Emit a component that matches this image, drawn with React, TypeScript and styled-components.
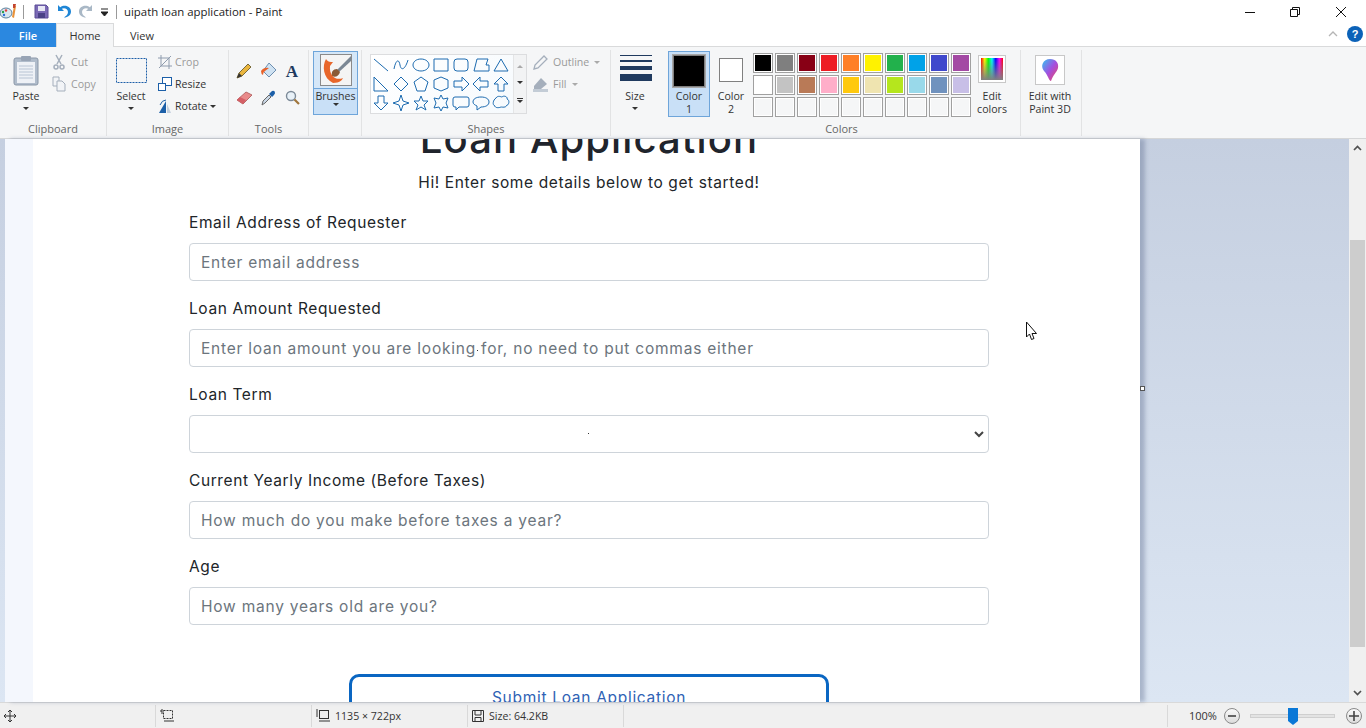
import React from 'react'
import styled, { createGlobalStyle } from 'styled-components'

const ui = `"Open Sans", "Noto Sans", sans-serif`
const web = `Inter, "Noto Sans", sans-serif`

const GlobalStyle = createGlobalStyle`
  html, body { margin: 0; padding: 0; height: 100%; overflow: hidden; background: #fff; }
  * { box-sizing: border-box; }
`

const Win = styled.div`
  width: 1366px; height: 728px; display: flex; flex-direction: column;
  font-family: ${ui}; font-size: 11px; color: #3b3b3b; overflow: hidden; position: relative;
`
const TitleBar = styled.div`
  height: 23px; display: flex; align-items: center; background: #fff; flex: none;
`
const QuickIcon = styled.span<{ $ml: number }>`
  margin-left: ${p => p.$ml}px; display: flex; flex: none;
`
const TitleSep = styled.span<{ $ml: number }>`
  margin-left: ${p => p.$ml}px; width: 1px; height: 14px; background: #9a9a9a; flex: none;
`
const TitleText = styled.span`
  margin-left: 7px; font-size: 11.4px; color: #1c1c1c; flex: 1;
`
const WinBtn = styled.span<{ $mr: number }>`
  margin-right: ${p => p.$mr}px; display: flex; flex: none;
`
const TabRow = styled.div`
  height: 24px; display: flex; align-items: stretch; background: #fff; flex: none; position: relative;
  border-bottom: 1px solid #d9dadb;
`
const FileTab = styled.div`
  width: 56px; margin-bottom: -1px; background: #2b88e0; color: #fff; font-weight: 600; display: flex;
  align-items: center; justify-content: center; font-size: 11px;
`
const Tab = styled.div<{ $active?: boolean }>`
  width: ${p => (p.$active ? 58 : 56)}px; display: flex; align-items: center; justify-content: center;
  font-size: 11px; margin-bottom: -1px; color: #333;
  ${p => p.$active && 'background:#f5f6f7;border:1px solid #d9dadb;border-bottom:none;'}
`
const RibbonRight = styled.div`
  margin-left: auto; display: flex; align-items: center; gap: 9px; padding: 0 3px 2px 0;
`
const Ribbon = styled.div`
  height: 92px; flex: none; background: #f5f6f7; border-bottom: 1px solid #d5d6d7; display: flex;
  padding-top: 3px;
`
const Group = styled.div<{ $w: number; $flat?: boolean }>`
  width: ${p => p.$w}px; height: 86px; flex: none; position: relative; display: flex; flex-direction: column;
  border-right: ${p => (p.$flat ? 'none' : '1px solid #e2e3e4')};
`
const GroupBody = styled.div<{ $pl?: number }>`
  flex: 1; display: flex; padding-left: ${p => p.$pl ?? 0}px; min-height: 0;
`
const GroupLabel = styled.div`
  height: 15px; text-align: center; font-size: 11px; color: #666; line-height: 15px; flex: none;
`
const BigBtn = styled.div<{ $w: number }>`
  width: ${p => p.$w}px; display: flex; flex-direction: column; align-items: center; text-align: center;
  font-size: 10.6px; line-height: 13px; color: #333;
`
const BigIcon = styled.div<{ $h: number }>`
  height: ${p => p.$h}px; display: flex; align-items: center; justify-content: center; flex: none;
`
const Caret = styled.span<{ $light?: boolean }>`
  display: inline-block; width: 0; height: 0; border-left: 3px solid transparent; border-right: 3px solid transparent;
  border-top: 3px solid ${p => (p.$light ? '#aaa' : '#333')}; flex: none;
`
const BlockCaret = styled(Caret)`
  margin-top: 4px;
`
const SmallCol = styled.div<{ $ml: number }>`
  margin-left: ${p => p.$ml}px; display: flex; flex-direction: column; gap: 0; padding-top: 1px;
`
const SmallBtn = styled.div<{ $off?: boolean; $tight?: boolean }>`
  height: 22px; display: flex; align-items: center; gap: ${p => (p.$tight ? 3 : 5)}px; font-size: 10.6px; white-space: nowrap;
  color: ${p => (p.$off ? '#9a9a9a' : '#333')};
`
const ToolGrid = styled.div`
  display: grid; grid-template-columns: repeat(3, 24px); grid-auto-rows: 27px; margin: 7px 0 0 3px;
  justify-items: center; align-items: center;
`
const BrushBtn = styled.div`
  width: 45px; height: 64px; margin: 1px 0 0 4px; border: 1px solid #6ea5da; background: #c9e0f7;
  display: flex; flex-direction: column; align-items: center; font-size: 10.6px; color: #333;
`
const BrushTop = styled.div`
  width: 100%; height: 37px; border-bottom: 1px solid #6ea5da; background: #d5e7f8; display: flex;
  align-items: center; justify-content: center; flex: none;
`
const BrushText = styled.div`
  line-height: 14px; margin-top: 0;
`
const Gallery = styled.div`
  width: 157px; height: 60px; margin: 4px 0 0 8px; background: #fff; border: 1px solid #dcdddf; display: flex; flex: none;
`
const ShapeGrid = styled.div`
  width: 142px; display: grid; grid-template-columns: repeat(7, 20px); grid-auto-rows: 19.3px;
  justify-items: center; align-items: center; background: linear-gradient(135deg, #fff, #f6fafd);
`
const GalleryScroll = styled.div`
  flex: 1; background: #f2f3f4; border-left: 1px solid #e4e5e6; display: flex; flex-direction: column;
  align-items: center; justify-content: space-around; padding: 3px 0;
`
const UpCaret = styled.span`
  width: 0; height: 0; border-left: 3px solid transparent; border-right: 3px solid transparent;
  border-bottom: 3px solid #aaa;
`
const MoreCaret = styled.span`
  border-top: 1px solid #333; padding-top: 1px; display: flex; width: 6px;
`
const SizeLines = styled.div`
  width: 32px; margin: 5px 0 0 2px; display: flex; flex-direction: column; gap: 4px; height: 35px; flex: none;
`
const SizeLine = styled.div<{ $h: number }>`
  height: ${p => p.$h}px; background: #1f3a5f; flex: none;
`
const ColorBtn = styled.div<{ $active?: boolean }>`
  width: ${p => (p.$active ? 42 : 36)}px; height: 66px; margin: 1px 0 0 ${p => (p.$active ? 0 : 3)}px; display: flex; flex-direction: column;
  align-items: center; text-align: center; font-size: 10.6px; line-height: 13px; color: #333;
  ${p => p.$active && 'background:#c9e0f7;border:1px solid #6ea5da;'}
`
const ColorBox = styled.div<{ $s: number; $c: string; $mt: number; $mb: number }>`
  width: ${p => p.$s}px; height: ${p => p.$s}px; background: ${p => p.$c}; border: 1px solid #808080;
  outline: 1px solid ${p => (p.$c === '#000' ? '#a8a8a8' : 'transparent')}; outline-offset: 0;
  margin: ${p => p.$mt}px 0 ${p => p.$mb}px; flex: none;
`
const Palette = styled.div`
  display: grid; grid-template-columns: repeat(10, 20px); grid-auto-rows: 20px; gap: 2px; margin: 3px 0 0 4px;
`
const Swatch = styled.div<{ $c?: string }>`
  border: 1px solid #a0a0a0; box-shadow: inset 0 0 0 1px #fff; background: ${p => p.$c ?? '#f5f6f7'};
`
const EditIcon = styled.div<{ $s: number; $mb: number }>`
  width: ${p => p.$s}px; height: ${p => p.$s}px; padding: 2px; background: #fff; border: 1px solid #c8c8c8; flex: none;
  margin: 5px 0 ${p => p.$mb}px;
`
const Spectrum = styled.div`
  width: 100%; height: 100%;
  background: linear-gradient(to bottom, transparent, #808080), linear-gradient(to right, #f00, #ff0, #0f0, #0ff, #00f, #f0f, #f00);
`

const Workspace = styled.div`
  flex: 1; min-height: 0; display: flex; background: linear-gradient(#c5cfe0, #dce6f3); position: relative;
`
const Canvas = styled.div`
  width: 1135px; margin-left: 5px; flex: none; background: #f4f7fd; padding-left: 28px;
  box-shadow: 5px 0 4px rgba(90, 105, 140, 0.38); position: relative; z-index: 1;
`
const Card = styled.div`
  height: 100%; background: #fff; overflow: hidden; padding-left: 156px;
`
const Form = styled.form`
  width: 800px; margin-top: -24px; color: #212529; font-family: ${web}; display: flex; flex-direction: column;
`
const Heading = styled.h1`
  margin: 0; font-size: 40px; font-weight: 500; line-height: 48px; text-align: center; color: #20242c; letter-spacing: 1.1px;
`
const Sub = styled.p`
  margin: 8px 0 0; font-size: 15.5px; line-height: 24px; text-align: center; color: #212529; letter-spacing: 0.61px;
`
const Field = styled.div`
  margin-top: 15px; height: 71px; display: flex; flex-direction: column; gap: 8px;
  &:first-of-type { margin-top: 16px; }
`
const Label = styled.label`
  font-size: 15.5px; line-height: 24px; height: 24px; letter-spacing: 0.6px; color: #212529;
`
const Input = styled.input`
  width: 100%; height: 38px; flex: none; border: 1px solid #ced4da; border-radius: 4px; padding: 0 11px;
  font: 15.5px ${web}; letter-spacing: 0.77px; background: #fff; outline: none;
  &::placeholder { color: #6c757d; opacity: 1; }
`
const SelectWrap = styled.div`
  position: relative; height: 38px; flex: none;
`
const Select = styled.select`
  width: 100%; height: 38px; border: 1px solid #ced4da; border-radius: 4px; background: #fff;
  appearance: none; font: 15.2px ${web}; outline: none;
`
const Chevron = styled.svg`
  position: absolute; right: 3px; top: 14px; pointer-events: none;
`
const Speck = styled.span`
  position: absolute; left: 399px; top: 18px; width: 1px; height: 1px; background: #333;
`
const InputDot = styled(Speck)`
  left: 288px; top: 21px;
`
const Submit = styled.button`
  width: 480px; height: 60px; margin: 48px 0 0 160px; flex: none; border: 3px solid #0a66c2; border-radius: 10px;
  background: #fff; color: #2f62b5; font: 15.5px ${web}; letter-spacing: 0.7px; padding: 0 0 14px;
`
const Handle = styled.span`
  position: absolute; left: 1140px; top: 247px; width: 5px; height: 5px; background: #fff; border: 1px solid #555; z-index: 2;
`
const Pointer = styled.svg`
  position: absolute; left: 1025px; top: 182px; z-index: 3;
`
const Gap = styled.div`
  flex: 1;
`
const Scrollbar = styled.div`
  width: 17px; flex: none; background: #f0f0f0; display: flex; flex-direction: column; align-items: center;
`
const ScrollArrow = styled.div`
  height: 18px; flex: none; display: flex; align-items: center; justify-content: center;
`
const ScrollTrack = styled.div`
  flex: 1; width: 100%; padding-top: 83px; padding-bottom: 37px; display: flex;
`
const ScrollThumb = styled.div`
  flex: 1; background: #cdcdcd; margin: 0 1px;
`
const Status = styled.div`
  height: 26px; flex: none; background: #f0f0f0; border-top: 1px solid #d9d9d9; display: flex; align-items: center;
  font-size: 10.6px; color: #333;
`
const StatusCell = styled.div<{ $w: number }>`
  width: ${p => p.$w}px; height: 22px; flex: none; border-right: 1px solid #d9d9d9; display: flex; align-items: center;
  gap: 5px; padding-left: 4px;
`
const Zoom = styled.div`
  flex: 1; display: flex; align-items: center; padding-left: 21px;
`
const ZoomText = styled.span`
  width: 35px; font-size: 11px; flex: none;
`
const ZoomCircle = styled.span`
  width: 16px; height: 16px; border-radius: 50%; border: 1px solid #8a8a8a; background: linear-gradient(#fafafa, #dcdcdc);
  display: flex; align-items: center; justify-content: center; color: #444; flex: none;
`
const Slider = styled.div`
  width: 85px; height: 4px; margin: 0 11px 0 10px; background: #e3e3e3; border: 1px solid #cfcfcf; position: relative; flex: none;
`
const SliderThumb = styled.svg`
  position: absolute; left: 37px; top: -7px;
`

const shapes = [
  'M2 3L16 15',
  'M2 13C4 3 7 3 8 9S13 14 16 4',
  'M9 3C14 3 17 6 17 9S14 15 9 15S1 12 1 9S4 3 9 3Z',
  'M2 3H16V15H2Z',
  'M5 3H13Q16 3 16 6V12Q16 15 13 15H5Q2 15 2 12V6Q2 3 5 3Z',
  'M2 15L5 3H16L14 9H17V15Z',
  'M9 3L16 15H2Z',
  'M2 2L16 16H2Z',
  'M9 2L16 9L9 16L2 9Z',
  'M9 2L16 7L13 16H5L2 7Z',
  'M9 2L16 5V13L9 16L2 13V5Z',
  'M2 6H10V2L17 9L10 16V12H2Z',
  'M16 6H8V2L1 9L8 16V12H16Z',
  'M6 16V9H2L9 2L16 9H12V16Z',
  'M6 2V9H2L9 16L16 9H12V2Z',
  'M9 1L11 7L17 9L11 11L9 17L7 11L1 9L7 7Z',
  'M9 2L11 7H16L12 11L14 16L9 13L4 16L6 11L2 7H7Z',
  'M9 1L11 5L16 4L14 9L16 14L11 13L9 17L7 13L2 14L4 9L2 4L7 5Z',
  'M3 3H15Q17 3 17 5V11Q17 13 15 13H7L4 16V13H3Q1 13 1 11V5Q1 3 3 3Z',
  'M9 3C14 3 17 5 17 8S14 13 9 13L5 16V12C3 11 1 10 1 8C1 5 4 3 9 3Z',
  'M4 4C6 1 9 3 10 3C12 1 16 3 15 5C18 6 17 11 15 11C14 14 10 13 9 13C7 14 3 14 3 12C0 11 1 6 4 4Z',
]

const row1 = ['#000', '#7f7f7f', '#880015', '#ed1c24', '#ff7f27', '#fff200', '#22b14c', '#00a2e8', '#3f48cc', '#a349a4']
const row2 = ['#fff', '#c3c3c3', '#b97a57', '#ffaec9', '#ffc90e', '#efe4b0', '#b5e61d', '#99d9ea', '#7092be', '#c8bfe7']

const fields = [
  { label: 'Email Address of Requester', placeholder: 'Enter email address' },
  { label: 'Loan Amount Requested', placeholder: 'Enter loan amount you are looking for, no need to put commas either', dot: true },
  { label: 'Loan Term', select: true },
  { label: 'Current Yearly Income (Before Taxes)', placeholder: 'How much do you make before taxes a year?' },
  { label: 'Age', placeholder: 'How many years old are you?' },
]

const App: React.FC = () => {
  return (
    <Win>
      <GlobalStyle />
      <TitleBar>
        <QuickIcon $ml={0}>
          <svg width="17" height="17" viewBox="0 0 17 17">
            <ellipse cx="6" cy="10" rx="6" ry="5" fill="#d9e6ee" stroke="#5a7f9c" />
            <circle cx="3" cy="9" r="1.2" fill="#2a9d4a" />
            <circle cx="6" cy="7.5" r="1.2" fill="#e23d3d" />
            <circle cx="4" cy="12" r="1.2" fill="#2b6cd8" />
            <path d="M12 14L14 3L16 3L14 15Z" fill="#e9923a" />
            <path d="M13 1L16 1L15 5L13 5Z" fill="#c2452f" />
          </svg>
        </QuickIcon>
        <TitleSep $ml={6} />
        <QuickIcon $ml={10}>
          <svg width="15" height="15" viewBox="0 0 15 15">
            <path d="M1 1H12L14 3V14H1Z" fill="#7a69b5" stroke="#5a4c96" />
            <rect x="4" y="2" width="7" height="5" fill="#e8e8f5" />
            <rect x="4" y="9" width="7" height="5" fill="#4b4286" />
          </svg>
        </QuickIcon>
        <QuickIcon $ml={8}>
          <svg width="14" height="15" viewBox="0 0 14 15">
            <path d="M1 1V7H7L4.8 4.8C7 3.4 11 4.5 11 8C11 10.5 9 12 7 13.5C11 13.5 14 11 14 7.5C14 2.5 8 0 3.2 3.2Z" fill="#1f86d6" />
          </svg>
        </QuickIcon>
        <QuickIcon $ml={8}>
          <svg width="14" height="15" viewBox="0 0 14 15">
            <path d="M13 1V7H7L9.2 4.8C7 3.4 3 4.5 3 8C3 10.5 5 12 7 13.5C3 13.5 0 11 0 7.5C0 2.5 6 0 10.8 3.2Z" fill="#a9b8c6" />
          </svg>
        </QuickIcon>
        <QuickIcon $ml={8}>
          <svg width="7" height="8" viewBox="0 0 7 8">
            <path d="M0 1H7M0 4H7L3.5 8Z" stroke="#222" fill="#222" strokeWidth="1" />
          </svg>
        </QuickIcon>
        <TitleSep $ml={8} />
        <TitleText>uipath loan application - Paint</TitleText>
        <WinBtn $mr={35}>
          <svg width="10" height="10" viewBox="0 0 10 10"><path d="M0 5.5H10" stroke="#111" /></svg>
        </WinBtn>
        <WinBtn $mr={36}>
          <svg width="10" height="10" viewBox="0 0 10 10" fill="none" stroke="#111">
            <path d="M.5 2.5H7.5V9.5H.5ZM2.5 2.5V.5H9.5V7.5H7.5" />
          </svg>
        </WinBtn>
        <WinBtn $mr={20}>
          <svg width="10" height="10" viewBox="0 0 10 10"><path d="M0 0L10 10M10 0L0 10" stroke="#111" /></svg>
        </WinBtn>
      </TitleBar>

      <TabRow>
        <FileTab>File</FileTab>
        <Tab $active>Home</Tab>
        <Tab>View</Tab>
        <RibbonRight>
          <svg width="10" height="6" viewBox="0 0 10 6"><path d="M1 5L5 1L9 5" fill="none" stroke="#b5b5b5" strokeWidth="1.3" /></svg>
          <svg width="16" height="16" viewBox="0 0 16 16">
            <circle cx="8" cy="8" r="8" fill="#0b62b8" />
            <text x="8" y="12" textAnchor="middle" fontSize="11" fontWeight="700" fill="#fff" fontFamily="Liberation Sans, sans-serif">?</text>
          </svg>
        </RibbonRight>
      </TabRow>

      <Ribbon>
        <Group $w={107}>
          <GroupBody>
            <BigBtn $w={52}>
              <BigIcon $h={40}>
                <svg width="26" height="31" viewBox="0 0 26 31">
                  <rect x="1" y="3" width="24" height="27" rx="2" fill="#b0bccb" stroke="#8a97a8" />
                  <rect x="4" y="7" width="18" height="21" fill="#eef1f6" />
                  <path d="M6 11H20M6 14H20M6 17H20M6 20H20M6 23H20" stroke="#b8c4d4" />
                  <rect x="8" y="1" width="10" height="5" rx="1" fill="#98a4b5" />
                </svg>
              </BigIcon>
              Paste
              <BlockCaret />
            </BigBtn>
            <SmallCol $ml={0}>
              <SmallBtn $off>
                <svg width="14" height="16" viewBox="0 0 14 16" fill="none" stroke="#a5afbc" strokeWidth="1.5">
                  <path d="M4 1L9 10M10 1L5 10" /><circle cx="4" cy="13" r="2" /><circle cx="10" cy="13" r="2" />
                </svg>
                Cut
              </SmallBtn>
              <SmallBtn $off>
                <svg width="14" height="16" viewBox="0 0 14 16" fill="#f2f4f7" stroke="#a5afbc">
                  <path d="M1 1H7V10H1Z" /><path d="M5 5H10L13 8V15H5Z" />
                </svg>
                Copy
              </SmallBtn>
            </SmallCol>
          </GroupBody>
          <GroupLabel>Clipboard</GroupLabel>
        </Group>

        <Group $w={122}>
          <GroupBody $pl={8}>
            <BigBtn $w={32}>
              <BigIcon $h={40}>
                <svg width="31" height="25" viewBox="0 0 31 25">
                  <rect x=".5" y=".5" width="30" height="24" fill="none" stroke="#1c5fa8" strokeDasharray="2 1" />
                </svg>
              </BigIcon>
              Select
              <BlockCaret />
            </BigBtn>
            <SmallCol $ml={11}>
              <SmallBtn $off $tight>
                <svg width="14" height="14" viewBox="0 0 14 14" fill="none" stroke="#8f9cae">
                  <path d="M3 0V11H14M0 3H11V14M1 13L13 1" />
                </svg>
                Crop
              </SmallBtn>
              <SmallBtn $tight>
                <svg width="14" height="14" viewBox="0 0 14 14" fill="#fff" stroke="#1c5fa8">
                  <rect x="4.5" y=".5" width="9" height="8" /><rect x=".5" y="6.5" width="7" height="7" />
                </svg>
                Resize
              </SmallBtn>
              <SmallBtn $tight>
                <svg width="14" height="14" viewBox="0 0 14 14">
                  <path d="M8 2V14H1Z" fill="#1c5fa8" /><path d="M9 5L13 14H9Z" fill="#c3cfdd" /><path d="M2 6Q4 1 8 1" fill="none" stroke="#1c5fa8" />
                </svg>
                Rotate <Caret />
              </SmallBtn>
            </SmallCol>
          </GroupBody>
          <GroupLabel>Image</GroupLabel>
        </Group>

        <Group $w={80}>
          <GroupBody>
            <ToolGrid>
              <svg width="16" height="16" viewBox="0 0 16 16">
                <path d="M1 15L3 10L12 1L15 4L6 13Z" fill="#eab63e" stroke="#7a6a3a" /><path d="M1 15L3 10L6 13Z" fill="#333" />
              </svg>
              <svg width="17" height="17" viewBox="0 0 17 17">
                <path d="M9 1L16 8L9 15L3 9Z" fill="#cfe2f2" stroke="#6d8fb0" /><path d="M1 9Q4 5 9 6L5 9Q3 10 3 13Q1 12 1 9Z" fill="#e8622a" />
              </svg>
              <svg width="18" height="16" viewBox="0 0 18 16">
                <text x="9" y="14" textAnchor="middle" fontSize="17" fontWeight="700" fill="#1f3a5f" fontFamily="Liberation Serif, serif">A</text>
              </svg>
              <svg width="17" height="14" viewBox="0 0 17 14">
                <path d="M1 9L10 1L16 4L7 13Z" fill="#e98a8a" stroke="#b86a6a" /><path d="M1 9L4 6L10 9L7 13Z" fill="#d45f66" />
              </svg>
              <svg width="15" height="16" viewBox="0 0 15 16">
                <path d="M1 15L2 11L8 5L10 7L4 13Z" fill="#c9d7e6" stroke="#666" /><path d="M8 4L11 1Q14 0 14 3Q14 4 11 7Z" fill="#1c5fa8" />
              </svg>
              <svg width="15" height="15" viewBox="0 0 15 15">
                <circle cx="6" cy="6" r="4.5" fill="#e8f1f8" stroke="#7c8a98" strokeWidth="1.4" /><path d="M9.5 9.5L14 14" stroke="#a0763c" strokeWidth="2.2" />
              </svg>
            </ToolGrid>
          </GroupBody>
          <GroupLabel>Tools</GroupLabel>
        </Group>

        <Group $w={53}>
          <GroupBody>
            <BrushBtn>
              <BrushTop>
                <svg width="32" height="32" viewBox="0 0 32 32">
                  <rect x=".5" y=".5" width="31" height="31" fill="#f4f4f4" stroke="#8a8a8a" />
                  <path d="M31 2L17 16L19 18L31 7Z" fill="#7b8794" />
                  <path d="M17 15C13 15 11 18 12 22C15 24 19 22 20 18Z" fill="#8a5a35" />
                  <path d="M6 5C2 12 3 24 13 29C20 29 22 26 23 24C16 27 9 22 10 12L13 8C10 8 8 8 6 5Z" fill="#e8662a" />
                </svg>
              </BrushTop>
              <BrushText>Brushes</BrushText>
              <Caret />
            </BrushBtn>
          </GroupBody>
          <GroupLabel />
        </Group>

        <Group $w={249}>
          <GroupBody>
            <Gallery>
              <ShapeGrid>
                {shapes.map(d => (
                  <svg key={d} width="18" height="18" viewBox="0 0 18 18">
                    <path d={d} fill="none" stroke="#1c6bb0" strokeWidth="1" />
                  </svg>
                ))}
              </ShapeGrid>
              <GalleryScroll>
                <UpCaret />
                <Caret />
                <MoreCaret><Caret /></MoreCaret>
              </GalleryScroll>
            </Gallery>
            <SmallCol $ml={6}>
              <SmallBtn $off>
                <svg width="15" height="15" viewBox="0 0 15 15" fill="none" stroke="#a5afbc" strokeWidth="1.3">
                  <path d="M1 14L2 10L11 1L14 4L5 13Z" />
                </svg>
                Outline <Caret $light />
              </SmallBtn>
              <SmallBtn $off>
                <svg width="15" height="15" viewBox="0 0 15 15">
                  <path d="M8 1L14 7L8 12H1V9Z" fill="#a5afbc" /><path d="M0 12H15V15H0Z" fill="#c3ccd6" />
                </svg>
                Fill <Caret $light />
              </SmallBtn>
            </SmallCol>
          </GroupBody>
          <GroupLabel>Shapes</GroupLabel>
        </Group>

        <Group $w={52} $flat>
          <GroupBody>
            <BigBtn $w={48}>
              <SizeLines>
                <SizeLine $h={1} />
                <SizeLine $h={2} />
                <SizeLine $h={4} />
                <SizeLine $h={7} />
              </SizeLines>
              Size
              <BlockCaret />
            </BigBtn>
          </GroupBody>
          <GroupLabel />
        </Group>

        <Group $w={358}>
          <GroupBody $pl={5}>
            <ColorBtn $active>
              <ColorBox $s={32} $c="#000" $mt={3} $mb={3} />
              Color
              <br />1
            </ColorBtn>
            <ColorBtn>
              <ColorBox $s={24} $c="#fff" $mt={7} $mb={8} />
              Color
              <br />2
            </ColorBtn>
            <Palette>
              {row1.map(c => <Swatch key={c} $c={c} />)}
              {row2.map(c => <Swatch key={c} $c={c} />)}
              {Array.from({ length: 10 }, (_, i) => <Swatch key={i} />)}
            </Palette>
            <BigBtn $w={42}>
              <EditIcon $s={28} $mb={7}><Spectrum /></EditIcon>
              Edit
              <br />colors
            </BigBtn>
          </GroupBody>
          <GroupLabel>Colors</GroupLabel>
        </Group>

        <Group $w={61}>
          <GroupBody>
            <BigBtn $w={58}>
              <EditIcon $s={30} $mb={5}>
                <svg width="24" height="24" viewBox="0 0 24 24">
                  <defs>
                    <linearGradient id="drop" x1="0" y1="0" x2="1" y2="1">
                      <stop offset="0" stopColor="#31c4f3" />
                      <stop offset="0.5" stopColor="#a34fe0" />
                      <stop offset="1" stopColor="#f0455a" />
                    </linearGradient>
                  </defs>
                  <path d="M12 1C18 1 21 5 20 10C19 14 15 17 13 23C11 23 10 17 6 13C2 8 5 1 12 1Z" fill="url(#drop)" />
                </svg>
              </EditIcon>
              Edit with
              <br />Paint 3D
            </BigBtn>
          </GroupBody>
          <GroupLabel />
        </Group>
      </Ribbon>

      <Workspace>
        <Canvas>
          <Card>
            <Form>
              <Heading>Loan Application</Heading>
              <Sub>Hi! Enter some details below to get started!</Sub>
              {fields.map(f => (
                <Field key={f.label}>
                  <Label>{f.label}</Label>
                  {f.select ? (
                    <SelectWrap>
                      <Select defaultValue="">
                        <option value="" />
                      </Select>
                      <Speck />
                      <Chevron width="14" height="10" viewBox="0 0 14 10">
                        <path d="M3 3L7 7L11 3" fill="none" stroke="#444" strokeWidth="2" />
                      </Chevron>
                    </SelectWrap>
                  ) : (
                    <SelectWrap>
                      <Input placeholder={f.placeholder} />
                      {f.dot && <InputDot />}
                    </SelectWrap>
                  )}
                </Field>
              ))}
              <Submit type="button">Submit Loan Application</Submit>
            </Form>
          </Card>
        </Canvas>
        <Handle />
        <Pointer width="14" height="20" viewBox="0 0 14 20">
          <path d="M1.5 1V16L4.5 13L6.5 18.5L9 17.5L7 12.5H11.5Z" fill="#fff" stroke="#111" />
        </Pointer>
        <Gap />
        <Scrollbar>
          <ScrollArrow>
            <svg width="9" height="6" viewBox="0 0 9 6"><path d="M1 5L4.5 1.5L8 5" fill="none" stroke="#505050" strokeWidth="1.7" /></svg>
          </ScrollArrow>
          <ScrollTrack><ScrollThumb /></ScrollTrack>
          <ScrollArrow>
            <svg width="9" height="6" viewBox="0 0 9 6"><path d="M1 1L4.5 4.5L8 1" fill="none" stroke="#505050" strokeWidth="1.7" /></svg>
          </ScrollArrow>
        </Scrollbar>
      </Workspace>

      <Status>
        <StatusCell $w={156}>
          <svg width="12" height="12" viewBox="0 0 12 12"><path d="M6 0V12M0 6H12M4 2L6 0L8 2M4 10L6 12L8 10M2 4L0 6L2 8M10 4L12 6L10 8" fill="none" stroke="#333" /></svg>
        </StatusCell>
        <StatusCell $w={156}>
          <svg width="14" height="14" viewBox="0 0 14 14" fill="none" stroke="#333">
            <path d="M2 0V5M0 2H2" /><rect x="3.5" y="1.5" width="9" height="8" strokeDasharray="2 1" /><path d="M4 12H14" />
          </svg>
        </StatusCell>
        <StatusCell $w={156}>
          <svg width="14" height="14" viewBox="0 0 14 14" fill="none" stroke="#333">
            <path d="M1 0V8" /><rect x="3.5" y="1.5" width="9" height="8" /><path d="M3 12H14" />
          </svg>
          1135 × 722px
        </StatusCell>
        <StatusCell $w={156}>
          <svg width="12" height="12" viewBox="0 0 12 12" fill="none" stroke="#333">
            <path d="M.5.5H11.5V11.5H.5ZM3 .5V5H9V.5M3 11.5V7.5H9V11.5" />
          </svg>
          Size: 64.2KB
        </StatusCell>
        <StatusCell $w={544} />
        <Zoom>
          <ZoomText>100%</ZoomText>
          <ZoomCircle>
            <svg width="8" height="8" viewBox="0 0 8 8"><path d="M0 4H8" stroke="#444" strokeWidth="1.6" /></svg>
          </ZoomCircle>
          <Slider>
            <SliderThumb width="10" height="17" viewBox="0 0 10 17">
              <path d="M0 0H10V13L5 17L0 13Z" fill="#0a78d7" />
            </SliderThumb>
          </Slider>
          <ZoomCircle>
            <svg width="10" height="10" viewBox="0 0 10 10"><path d="M0 5H10M5 0V10" stroke="#444" strokeWidth="1.6" /></svg>
          </ZoomCircle>
        </Zoom>
      </Status>
    </Win>
  )
}

export default App
